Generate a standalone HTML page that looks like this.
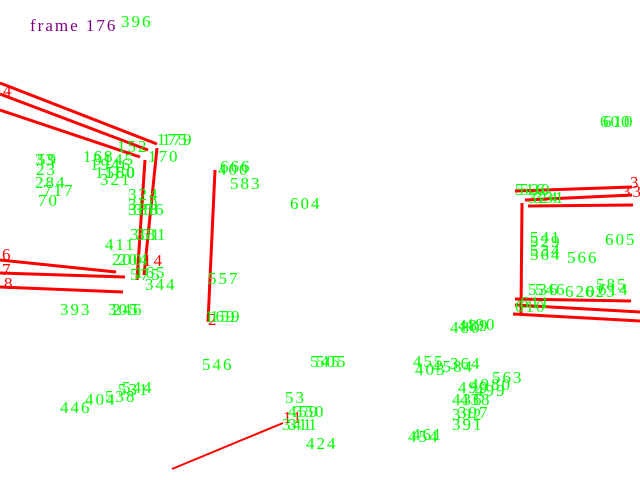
<!DOCTYPE html>
<html><head><meta charset="utf-8"><style>
html,body{margin:0;padding:0;background:#fff;width:640px;height:480px;overflow:hidden}
svg text{font-family:"Liberation Serif",serif;font-size:17px;letter-spacing:2px}
.g{fill:#00ff00}.r{fill:#ff0000}
</style></head><body>
<svg width="640" height="480" viewBox="0 0 640 480" xmlns="http://www.w3.org/2000/svg">
<text x="30" y="31" style="fill:#800080">frame 176</text>
<g stroke="#ff0000" stroke-width="3" fill="none">
<line x1="0" y1="83" x2="157" y2="144"/>
<line x1="0" y1="94" x2="148" y2="150"/>
<line x1="0" y1="110" x2="140" y2="157"/>
<line x1="145" y1="160" x2="137" y2="280"/>
<line x1="157" y1="148" x2="144" y2="275"/>
<line x1="215" y1="170" x2="208" y2="322"/>
<line x1="0" y1="260" x2="116" y2="272"/>
<line x1="0" y1="273" x2="125" y2="277"/>
<line x1="0" y1="287" x2="123" y2="292"/>
<line x1="515" y1="191" x2="632" y2="187"/>
<line x1="525" y1="200" x2="632" y2="195"/>
<line x1="528" y1="206" x2="633" y2="205"/>
<line x1="522" y1="203" x2="521" y2="314"/>
<line x1="515" y1="299" x2="631" y2="301"/>
<line x1="515" y1="305" x2="640" y2="312"/>
<line x1="513" y1="314" x2="640" y2="321"/>
<line x1="172" y1="469" x2="283" y2="423" stroke-width="2"/>
</g>
<g class="r">
<text x="3" y="96">4</text><text x="2" y="260">6</text><text x="2" y="275">7</text><text x="4" y="289">8</text>
<text x="630" y="188">3</text><text x="622" y="197">33</text>
<text x="143" y="266">14</text><text x="283" y="423">11</text><text x="208" y="325">2</text>
</g>
<g class="g">
<text x="121" y="27">396</text>
<text x="600" y="127">600</text><text x="603" y="127">610</text>
<text x="157" y="145">175</text><text x="162" y="145">179</text><text x="148" y="162">170</text><text x="117" y="152">152</text>
<text x="35" y="165">33</text><text x="37" y="165">59</text><text x="36" y="175">23</text><text x="83" y="162">168</text><text x="90" y="170">1946</text><text x="93" y="165">3145</text><text x="95" y="178">1580</text><text x="100" y="185">321</text><text x="105" y="178">160</text>
<text x="35" y="188">284</text><text x="43" y="196">717</text><text x="38" y="206">70</text>
<text x="220" y="172">666</text><text x="218" y="175">400</text><text x="230" y="189">583</text><text x="290" y="209">604</text>
<text x="128" y="200">324</text><text x="128" y="210">350</text><text x="128" y="215">388</text><text x="134" y="215">356</text><text x="130" y="240">351</text><text x="136" y="240">381</text>
<text x="105" y="250">411</text><text x="112" y="265">200</text><text x="118" y="265">204</text><text x="130" y="280">575</text><text x="135" y="278">165</text><text x="145" y="290">344</text>
<text x="208" y="284">557</text><text x="60" y="315">393</text><text x="108" y="315">305</text><text x="112" y="315">246</text><text x="205" y="322">169</text><text x="210" y="322">159</text>
<text x="515" y="195">516</text><text x="520" y="195">530</text><text x="528" y="203">324</text><text x="534" y="203">331</text>
<text x="530" y="247">529</text><text x="530" y="243">541</text><text x="530" y="260">564</text><text x="530" y="256">534</text><text x="567" y="263">566</text><text x="605" y="245">605</text>
<text x="528" y="295">536</text><text x="535" y="295">546</text><text x="565" y="297">620</text><text x="585" y="297">623</text><text x="596" y="290">585</text><text x="598" y="295">614</text>
<text x="515" y="312">610</text><text x="520" y="308">611</text>
<text x="450" y="333">480</text><text x="458" y="331">489</text><text x="465" y="330">490</text>
<text x="202" y="370">546</text><text x="310" y="367">545</text><text x="316" y="367">505</text>
<text x="413" y="367">455</text><text x="415" y="375">403</text><text x="432" y="372">4584</text><text x="450" y="369">364</text>
<text x="492" y="383">563</text><text x="458" y="393">499</text><text x="470" y="390">4980</text><text x="475" y="396">499</text>
<text x="60" y="413">446</text><text x="85" y="405">404</text><text x="105" y="402">538</text><text x="118" y="395">531</text><text x="122" y="393">544</text>
<text x="285" y="403">53</text><text x="288" y="417">459</text><text x="294" y="417">350</text><text x="282" y="430">341</text><text x="288" y="430">311</text>
<text x="452" y="405">436</text><text x="460" y="405">438</text><text x="452" y="420">392</text><text x="458" y="418">397</text><text x="452" y="430">391</text>
<text x="306" y="449">424</text><text x="408" y="442">454</text><text x="412" y="440">461</text>
</g>
</svg>
</body></html>
